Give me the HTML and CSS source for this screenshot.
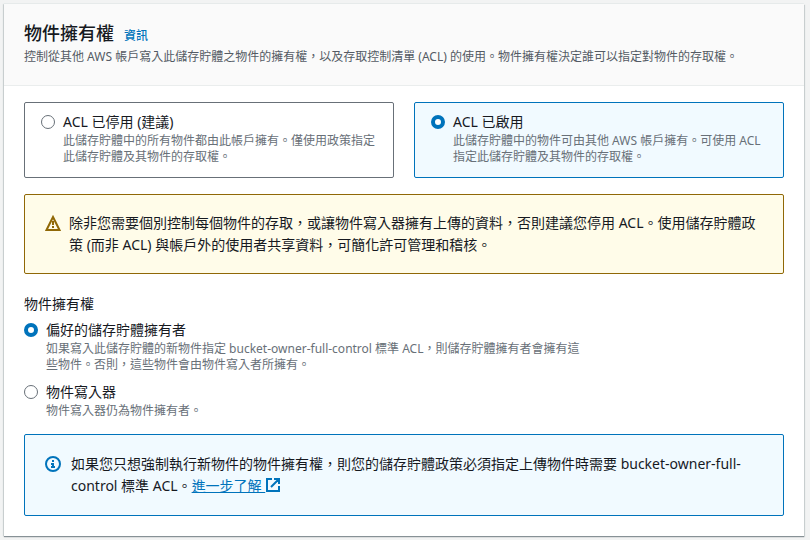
FILE: index.html
```html
<!DOCTYPE html>
<html lang="zh-TW">
<head>
    <meta charset="UTF-8">
    <meta name="viewport" content="width=device-width, initial-scale=1.0">
    <title>物件擁有權</title>
    <link rel="stylesheet" href="styles.css">
</head>
<body>
    <section class="panel">
        <header class="panel-header">
            <div class="title-row">
                <h2>物件擁有權</h2>
                <a href="#" class="info-link">資訊</a>
            </div>
            <p class="description">控制從其他 AWS 帳戶寫入此儲存貯體之物件的擁有權，以及存取控制清單 (ACL) 的使用。物件擁有權決定誰可以指定對物件的存取權。</p>
        </header>

        <div class="panel-body">
            <div class="tiles">
                <label class="option tile">
                    <input type="radio" name="acl">
                    <span class="option-text">
                        <span class="option-label">ACL 已停用 (建議)</span>
                        <span class="description">此儲存貯體中的所有物件都由此帳戶擁有。僅使用政策指定此儲存貯體及其物件的存取權。</span>
                    </span>
                </label>
                <label class="option tile tile-selected">
                    <input type="radio" name="acl" checked>
                    <span class="option-text">
                        <span class="option-label">ACL 已啟用</span>
                        <span class="description">此儲存貯體中的物件可由其他 AWS 帳戶擁有。可使用 ACL 指定此儲存貯體及其物件的存取權。</span>
                    </span>
                </label>
            </div>

            <div class="alert alert-warning">
                <svg class="icon" viewBox="0 0 16 16" aria-hidden="true">
                    <path d="M8 2L14.5 15H1.5z"/>
                    <path d="M8 6v4M8 11v2"/>
                </svg>
                <p>除非您需要個別控制每個物件的存取，或讓物件寫入器擁有上傳的資料，否則建議您停用 ACL。使用儲存貯體政策 (而非 ACL) 與帳戶外的使用者共享資料，可簡化許可管理和稽核。</p>
            </div>

            <fieldset class="ownership">
                <legend>物件擁有權</legend>
                <label class="option">
                    <input type="radio" name="ownership" checked>
                    <span class="option-text">
                        <span class="option-label">偏好的儲存貯體擁有者</span>
                        <span class="description">如果寫入此儲存貯體的新物件指定 bucket-owner-full-control 標準 ACL，則儲存貯體擁有者會擁有這些物件。否則，這些物件會由物件寫入者所擁有。</span>
                    </span>
                </label>
                <label class="option">
                    <input type="radio" name="ownership">
                    <span class="option-text">
                        <span class="option-label">物件寫入器</span>
                        <span class="description">物件寫入器仍為物件擁有者。</span>
                    </span>
                </label>
            </fieldset>

            <div class="alert alert-info">
                <svg class="icon" viewBox="0 0 16 16" aria-hidden="true">
                    <circle cx="8" cy="8" r="7"/>
                    <path d="M8 4v2M6 8h2v3M6 11h4M8 7v4"/>
                </svg>
                <p>如果您只想強制執行新物件的物件擁有權，則您的儲存貯體政策必須指定上傳物件時需要 bucket-owner-full-control 標準 ACL。<a href="#" class="learn-more">進一步了解 <svg class="icon" viewBox="0 0 16 16" aria-hidden="true"><path d="M7 2H2v12h12V9M9 2h5v5M14 2L6 10"/></svg></a></p>
            </div>
        </div>
    </section>
</body>
</html>
```

FILE: styles.css
```css
* {
    box-sizing: border-box;
}

body {
    margin: 0;
    padding: 4px 6px 4px 4px;
    background: #f2f3f3;
    color: #16191f;
    font-family: "Noto Sans", "Noto Sans CJK TC", sans-serif;
    font-size: 14px;
    line-height: 22px;
}

h2,
p {
    margin: 0;
}

.panel {
    background: #fff;
    box-shadow: 0 1px 1px #879196, 1px 1px 1px #d5dbdb, -1px 0 1px #d5dbdb, 0 -1px 0 #eaeded;
}

.panel-header {
    padding: 16px 20px 20px;
    background: #fafafa;
    border-bottom: 1px solid #eaeded;
}

.title-row {
    display: flex;
    align-items: baseline;
    gap: 10px;
    margin-bottom: 3px;
}

h2 {
    font-size: 18px;
    font-weight: 500;
    line-height: 26px;
}

.info-link {
    color: #0073bb;
    font-size: 12px;
    font-weight: 500;
    line-height: 16px;
    text-decoration: none;
}

.description {
    color: #687078;
    font-size: 12px;
    line-height: 16px;
}

.panel-header .description {
    color: #545b64;
}

.panel-body {
    padding: 16px 20px 20px;
}

.tiles {
    display: grid;
    grid-template-columns: 1fr 1fr;
    gap: 20px;
    margin-bottom: 16px;
}

.option {
    display: flex;
    align-items: flex-start;
    gap: 8px;
}

.option-text {
    display: flex;
    flex-direction: column;
}

.option input {
    appearance: none;
    flex: none;
    width: 14px;
    height: 14px;
    margin: 4px 0 0;
    border: 1px solid #687078;
    border-radius: 50%;
    background: #fff;
}

.option input:checked {
    border: 4px solid #0073bb;
}

.tile {
    padding: 8px 16px 12px;
    border: 1px solid #687078;
    border-radius: 2px;
}

.tile-selected {
    background: #f1faff;
    border-color: #0073bb;
}

.alert {
    display: flex;
    border: 1px solid;
    border-radius: 2px;
}

.icon {
    flex: none;
    width: 16px;
    height: 16px;
    fill: none;
    stroke: currentColor;
    stroke-width: 2;
}

.alert > .icon {
    margin-top: 3px;
}

.alert p {
    color: #16191f;
}

.alert-warning {
    gap: 8px;
    padding: 17px 20px;
    background: #fffce9;
    color: #906806;
}

.alert-info {
    gap: 10px;
    padding: 18px 20px;
    background: #f1faff;
    color: #0073bb;
}

.ownership {
    display: flex;
    flex-direction: column;
    gap: 8px;
    margin: 19px 0 15px;
    padding: 4px 0 0;
    border: 0;
}

.ownership legend {
    padding: 0;
}

.ownership .option-text {
    max-width: 540px;
}

.learn-more {
    color: #0073bb;
}

.learn-more .icon {
    vertical-align: -2px;
}
```
